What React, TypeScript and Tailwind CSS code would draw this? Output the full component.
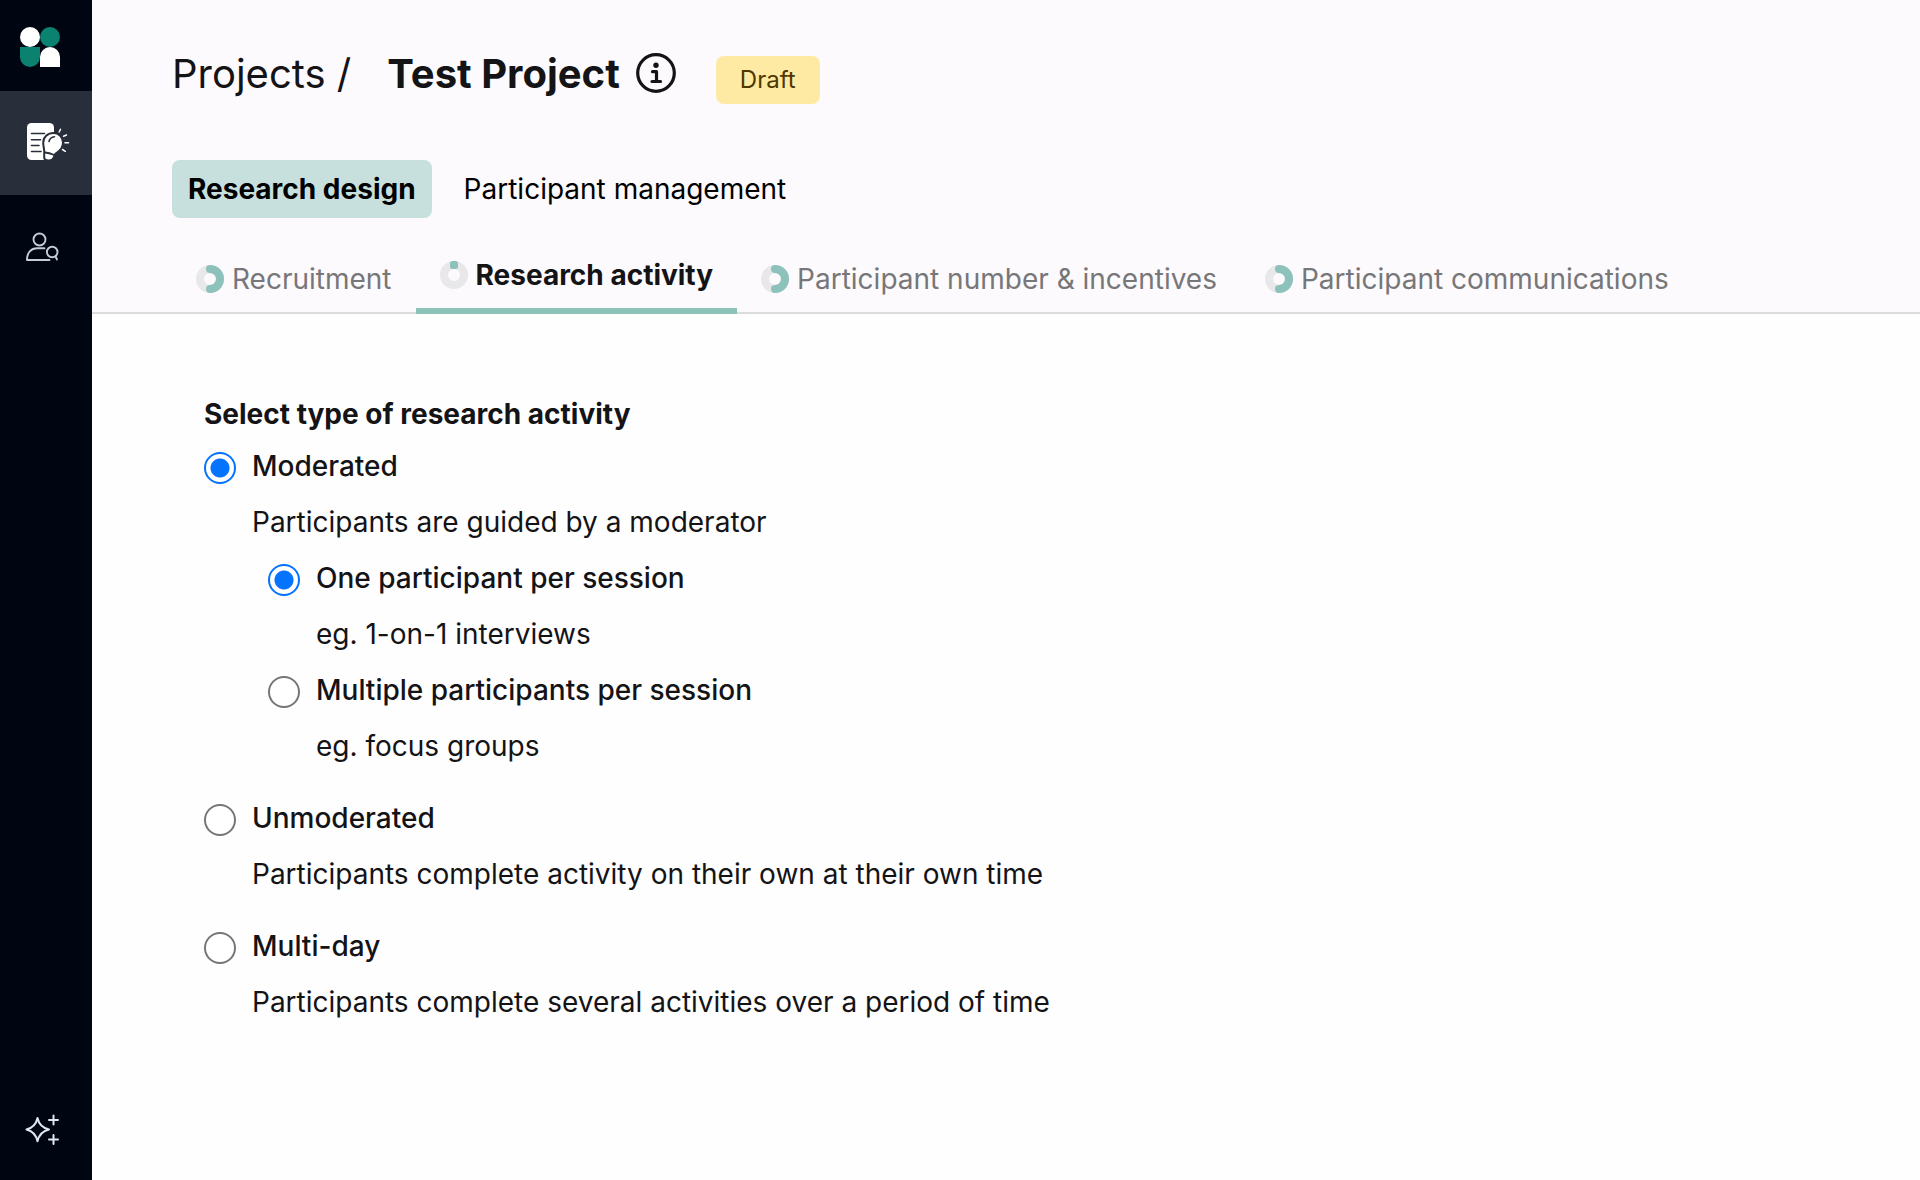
import { useState } from "react";

const tabs = [
  { name: "Recruitment", progress: 50 },
  { name: "Research activity", progress: 0 },
  { name: "Participant number & incentives", progress: 50 },
  { name: "Participant communications", progress: 50 },
];

function Logo() {
  return (
    <svg className="w-10 h-10" viewBox="0 0 40 40">
      <circle cx="10" cy="10" r="10" fill="#fff" />
      <circle cx="30" cy="10" r="10" fill="#0b8270" />
      <path d="M0 20h20v10a10 10 0 0 1-20 0z" fill="#0b8270" />
      <path d="M20 40V30a10 10 0 0 1 20 0v10z" fill="#fff" />
    </svg>
  );
}

function ProjectsIcon() {
  return (
    <svg className="w-12 h-12" viewBox="0 0 48 48" fill="none" strokeLinecap="round">
      <rect x="3" y="4" width="27" height="37" rx="4.5" fill="#fff" />
      <path d="M7.500 14.500h13M7.500 20.800h9M7.500 26.500h7.500M7.500 32.500h9.500" stroke="#292e3b" strokeWidth="1.600" />
      <path
        d="M29.500 14c-5.800 0-10.300 4-10.300 9.700 0 4.500 1.600 6.800 1 11.300v3.500c0 3.500 8 4.500 9.500 0l1.300-3.200c2.400-2.200 8-4.500 8-11.600 0-5.700-4.200-9.700-9.500-9.700z"
        fill="#fff"
        stroke="#292e3b"
        strokeWidth="2"
      />
      <path d="M25 22.500c.5-2.800 2.500-4.500 5.500-4.800" stroke="#292e3b" strokeWidth="1.600" />
      <path d="M21 33.500c3 .2 5.500.8 8.500 2.200" stroke="#292e3b" strokeWidth="1.800" />
      <path d="M35.200 13l1.300-2.800M39.500 17.200l3-1.200M41 23.700h3.500M38.500 30.500l2.800 1.800" stroke="#fff" strokeWidth="1.500" />
    </svg>
  );
}

function ParticipantsIcon() {
  return (
    <svg className="w-9 h-9" viewBox="0 0 36 36" fill="none" stroke="#c5cad6" strokeWidth="1.900" strokeLinecap="round" strokeLinejoin="round">
      <circle cx="15.500" cy="10.500" r="6" />
      <path d="M20.500 19.300H13C7 19.300 3 23.500 3 31h22.500" />
      <circle cx="28.200" cy="23" r="5.300" />
      <path d="M31.500 27.500l1.500 3" />
    </svg>
  );
}

function SparkleIcon() {
  return (
    <svg className="w-9 h-9" viewBox="0 0 36 36" fill="none" stroke="#e3e7f2" strokeWidth="2" strokeLinecap="round" strokeLinejoin="round">
      <path d="M13.500 8c1.400 6.500 4.500 9.800 11.500 11.500-7 1.700-10.100 5-11.500 11.800C12.100 24.500 9 21.200 2.500 19.500 9 17.800 12.100 14.500 13.500 8z" />
      <path d="M29.500 5.500v9M25 10h9M29.500 25v9M25 29.500h9" />
    </svg>
  );
}

function InfoIcon() {
  return (
    <svg className="w-10 h-10" viewBox="0 0 40 40" fill="none" stroke="currentColor" strokeWidth="3.200">
      <circle cx="20" cy="20" r="18.300" />
      <circle cx="20" cy="12.300" r="2.700" fill="currentColor" stroke="none" />
      <path d="M16.500 18.700h4v9.500M16 28.500h8.500" strokeLinecap="round" strokeLinejoin="round" />
    </svg>
  );
}

function ProgressRing({ value }: { value: number }) {
  return (
    <svg className="w-7 h-7 shrink-0" viewBox="0 0 28 28" fill="none" strokeWidth="8">
      <circle cx="14" cy="14" r="10" stroke="#e8e7e9" />
      {value > 0 ? (
        <path d="M14 4a10 10 0 0 1 0 20" stroke="#8cc2bb" strokeLinecap="round" />
      ) : (
        <rect x="10" y="0" width="8" height="8" rx="2.500" fill="#8cc2bb" />
      )}
    </svg>
  );
}

type OptionProps = {
  name: string;
  label: string;
  description: string;
  checked: boolean;
  onSelect: () => void;
};

function Option({ name, label, description, checked, onSelect }: OptionProps) {
  return (
    <div>
      <label className="flex items-start gap-4 font-medium cursor-pointer">
        <input
          type="radio"
          name={name}
          checked={checked}
          onChange={onSelect}
          className="appearance-none shrink-0 w-8 h-8 mt-3.5 rounded-full border-2 border-[#767678] bg-white checked:border-[#0673ff] checked:bg-[radial-gradient(circle,#0673ff_9px,white_10px)]"
        />
        {label}
      </label>
      <p className="pl-12">{description}</p>
    </div>
  );
}

export default function App() {
  const [activeTab, setActiveTab] = useState("Research activity");
  const [activity, setActivity] = useState("moderated");
  const [session, setSession] = useState("one");

  return (
    <div className="flex min-h-screen bg-[#fefefe] font-['Inter',sans-serif] text-[28px] text-[#141316]">
      <aside className="flex flex-col w-23 shrink-0 bg-[#000611]">
        <a href="#" aria-label="Home" className="flex items-center h-[91px] pl-5 pt-[3px]">
          <Logo />
        </a>
        <a href="#projects" aria-label="Projects" className="flex items-center h-26 pl-6 bg-[#292e3b]">
          <ProjectsIcon />
        </a>
        <a href="#participants" aria-label="Participants" className="flex items-center h-26 pl-6">
          <ParticipantsIcon />
        </a>
        <button aria-label="Assistant" className="flex items-center h-26 pl-6 mt-auto">
          <SparkleIcon />
        </button>
      </aside>

      <main className="flex-1 min-w-0">
        <header className="pt-11 pl-20 bg-[#fcfafd] border-b-2 border-[#dcdbde]">
          <div className="flex items-baseline text-[40px] leading-[60px]">
            <a href="#projects">Projects /</a>
            <h1 className="ml-9 font-bold">Test Project</h1>
            <button aria-label="Project info" className="self-center ml-4 mb-0.5">
              <InfoIcon />
            </button>
            <span className="ml-10 px-6 rounded-lg bg-[#ffeaa4] text-[#4d3800] text-2xl leading-12">Draft</span>
          </div>

          <div className="flex gap-4 mt-14 text-black">
            <button className="h-[58px] px-4 rounded-lg bg-[#c7dfdd] font-bold">Research design</button>
            <button className="h-[58px] px-4">Participant management</button>
          </div>

          <nav className="flex items-end mt-9 -mb-0.5 leading-[42px]">
            {tabs.map((tab) => (
              <button
                key={tab.name}
                onClick={() => setActiveTab(tab.name)}
                className={
                  tab.name === activeTab
                    ? "flex items-center gap-2 px-6 pb-3 border-b-6 border-[#8cc2b7] font-bold"
                    : "flex items-center gap-2 px-6 pb-3 border-b-2 border-[#dcdbde] text-[#777679]"
                }
              >
                <ProgressRing value={tab.progress} />
                {tab.name}
              </button>
            ))}
          </nav>
        </header>

        <section className="pt-19 pl-28 pb-12 leading-14">
          <h2 className="font-bold leading-12">Select type of research activity</h2>
          <div className="flex flex-col gap-4">
            <div>
              <Option
                name="activity"
                label="Moderated"
                description="Participants are guided by a moderator"
                checked={activity === "moderated"}
                onSelect={() => setActivity("moderated")}
              />
              <div className="pl-16">
                <Option
                  name="session"
                  label="One participant per session"
                  description="eg. 1-on-1 interviews"
                  checked={session === "one"}
                  onSelect={() => setSession("one")}
                />
                <Option
                  name="session"
                  label="Multiple participants per session"
                  description="eg. focus groups"
                  checked={session === "multiple"}
                  onSelect={() => setSession("multiple")}
                />
              </div>
            </div>
            <Option
              name="activity"
              label="Unmoderated"
              description="Participants complete activity on their own at their own time"
              checked={activity === "unmoderated"}
              onSelect={() => setActivity("unmoderated")}
            />
            <Option
              name="activity"
              label="Multi-day"
              description="Participants complete several activities over a period of time"
              checked={activity === "multi-day"}
              onSelect={() => setActivity("multi-day")}
            />
          </div>
        </section>
      </main>
    </div>
  );
}
